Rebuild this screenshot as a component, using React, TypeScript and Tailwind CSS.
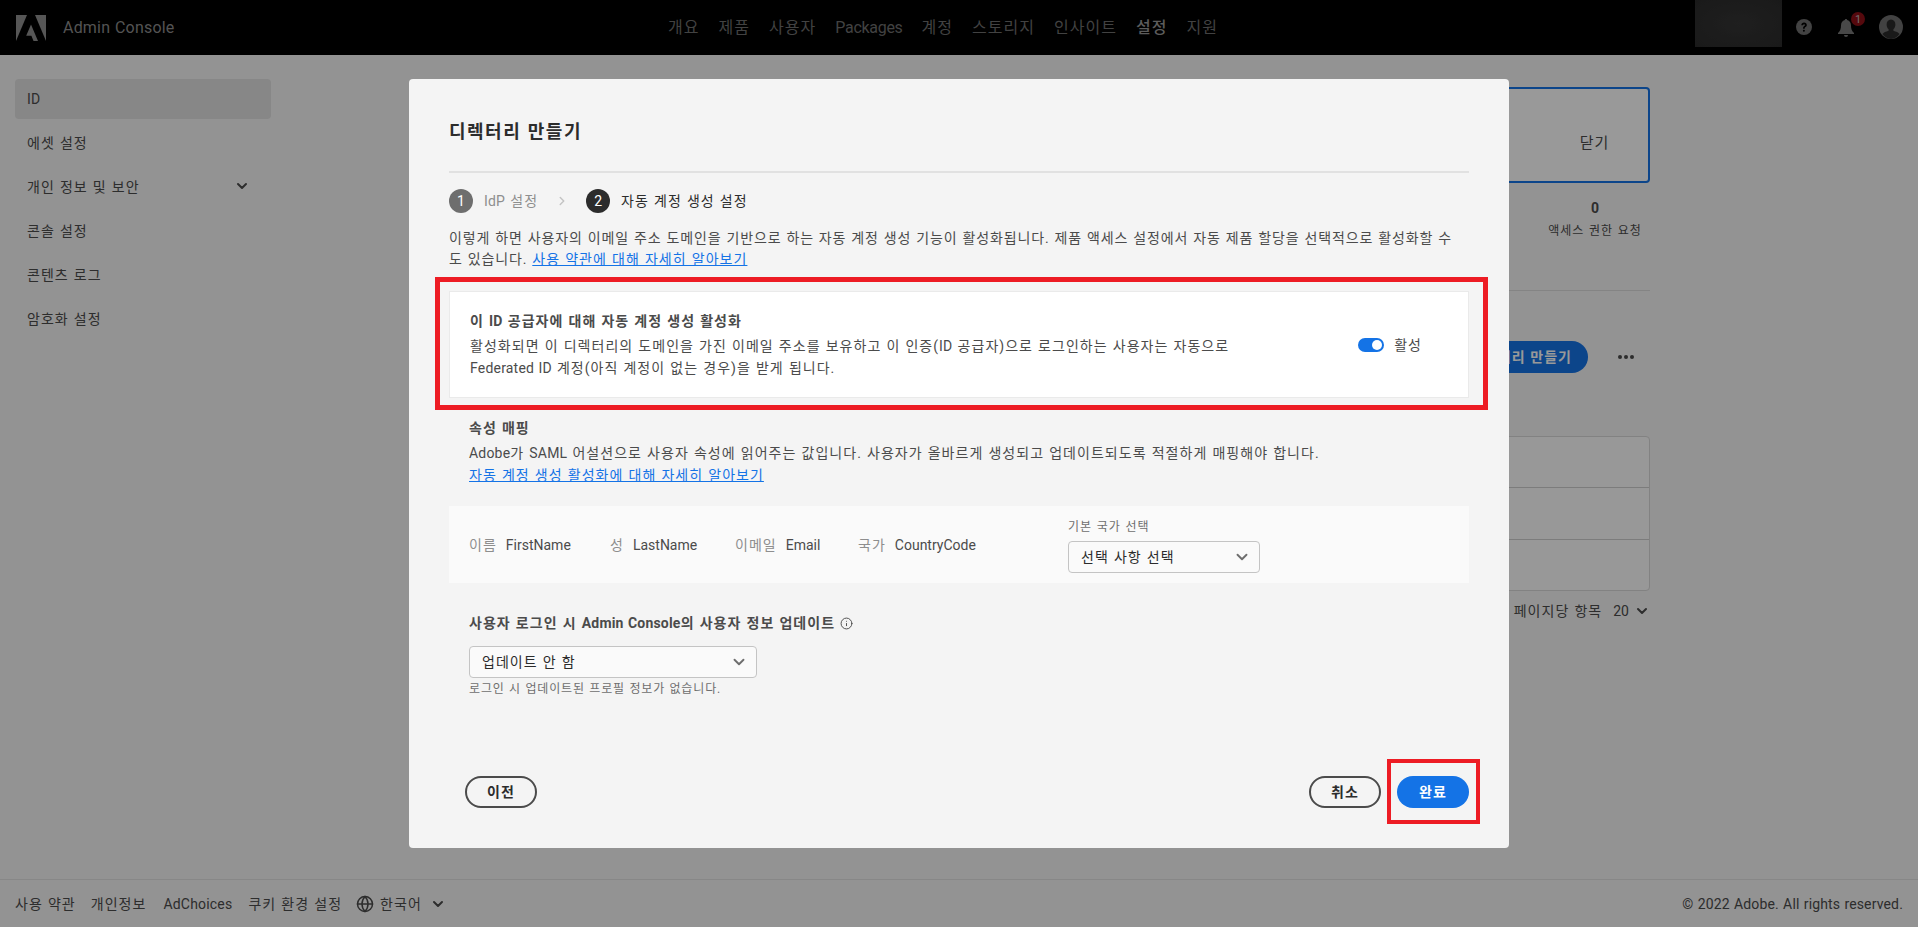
import React from 'react';
import { ChevronDown, ChevronRight, Globe, Info } from 'lucide-react';

const navItems = ['개요', '제품', '사용자', 'Packages', '계정', '스토리지', '인사이트', '설정', '지원'];
const sideItems = ['ID', '에셋 설정', '개인 정보 및 보안', '콘솔 설정', '콘텐츠 로그', '암호화 설정'];
const mappings = [
  { label: '이름', value: 'FirstName', width: 'w-[141px]' },
  { label: '성', value: 'LastName', width: 'w-[125px]' },
  { label: '이메일', value: 'Email', width: 'w-[123px]' },
  { label: '국가', value: 'CountryCode', width: 'w-[210px]' },
];

const Latin: React.FC<{ children: React.ReactNode }> = ({ children }) => (
  <span className="tracking-[0.2px]">{children}</span>
);

const Header = () => (
  <header className="relative flex h-[55px] shrink-0 items-center bg-black text-[#6e6e6e]">
    <svg viewBox="0 0 30 26" className="ml-4 h-[26px] w-[30px]" fill="#8f8f8f">
      <path d="M0 0h11L0 26z" />
      <path d="M19 0h11v26z" />
      <path d="M15 9.5 22 26h-4.500l-2.100-5.200h-5.200z" />
    </svg>
    <span className="ml-[17px] w-[605px] text-base tracking-[0.2px] text-[#8c8c8c]">Admin Console</span>
    <nav className="flex items-center gap-[19px] text-base">
      {navItems.map((item) => (
        <span key={item} className={item === '설정' ? 'font-medium text-[#999999]' : ''}>
          {item === 'Packages' ? <span className="tracking-[-0.3px]">{item}</span> : item}
        </span>
      ))}
    </nav>
    <div className="ml-auto flex h-full items-start">
      <div className="h-[47px] w-[87px] bg-[radial-gradient(ellipse_at_center,#343434_0%,#2b2b2b_100%)]" />
      <svg viewBox="0 0 16 16" className="ml-[14px] mt-[19px] h-4 w-4">
        <circle cx="8" cy="8" r="8" fill="#707070" />
        <path d="M5.3 6.2C5.4 4.6 6.5 3.6 8.1 3.6c1.6 0 2.7 1 2.7 2.3 0 1-.5 1.6-1.3 2.1-.6.4-.8.7-.8 1.3v.4H7.1v-.6c0-1 .4-1.5 1.1-2 .6-.4.8-.7.8-1.1 0-.5-.4-.8-.9-.8-.6 0-1 .4-1.1 1z" fill="#000" />
        <circle cx="7.9" cy="11.8" r="1" fill="#000" />
      </svg>
      <div className="relative ml-[26px] mt-[19px]">
        <svg viewBox="0 0 16 18" className="h-[18px] w-4" fill="#787878">
          <path d="M8 0c.7 0 1.2.5 1.2 1.1C11.6 1.7 13 3.700 13 6.500c0 3.200.8 5.500 3 7.500v1H0v-1c2.200-2 3-4.300 3-7.500 0-2.800 1.400-4.800 3.800-5.400C6.800.5 7.300 0 8 0z" />
          <path d="M6 16h4a2 2 0 0 1-4 0z" />
        </svg>
        <span className="absolute left-[13px] top-[-7px] flex h-[14px] w-[14px] items-center justify-center rounded-full bg-[#8e0f16] text-[11px] leading-none tracking-normal text-[#b9b9b9]">
          1
        </span>
      </div>
      <svg viewBox="0 0 24 24" className="ml-[25px] mr-[15px] mt-[15px] h-6 w-6">
        <circle cx="12" cy="12" r="12" fill="#6e6e6e" />
        <path d="M12 4.500c2.800 0 4.400 2.200 4.400 5 0 2-.8 3.800-2 4.800v1.500c2.800.8 5 1.700 6.200 3.200A12 12 0 0 1 12 24a12 12 0 0 1-8.600-5c1.200-1.500 3.400-2.400 6.200-3.200v-1.500c-1.200-1-2-2.800-2-4.800 0-2.800 1.600-5 4.400-5z" fill="#2b2b2b" />
      </svg>
    </div>
  </header>
);

const Sidebar = () => (
  <aside className="w-[486px] shrink-0 pl-[15px] pt-6 text-sm text-[#4b4b4b]">
    <ul className="flex w-[256px] flex-col gap-1">
      {sideItems.map((item) => (
        <li
          key={item}
          className={`flex h-10 items-center justify-between rounded-[4px] pl-3 pr-[21px] ${item === 'ID' ? 'bg-[#e1e1e1]' : ''}`}
        >
          {item === 'ID' ? <Latin>{item}</Latin> : item}
          {item === '개인 정보 및 보안' && <ChevronDown size={16} strokeWidth={3} className="-translate-y-px" />}
        </li>
      ))}
    </ul>
  </aside>
);

// only the part right of the modal is visible, it starts behind the dialog
const MainBehind = () => (
  <main className="flex min-w-0 flex-1 flex-col pr-[268px] pt-8 text-[#4b4b4b]">
    <div className="flex h-24 items-center justify-end rounded-[4px] border-2 border-[#1473e6] bg-white pt-4">
      <span className="w-[107px] text-center text-[15px]">닫기</span>
    </div>
    <div className="ml-auto mt-[15px] w-[110px] text-center">
      <div className="text-sm font-bold leading-5 tracking-normal">0</div>
      <div className="mt-1 text-xs leading-[18px]">액세스 권한 요청</div>
    </div>
    <div className="mt-[50px] h-px bg-[#dcdcdc]" />
    <div className="mt-[50px] flex items-center justify-end">
      <button className="h-8 w-[180px] rounded-full bg-[#1473e6] pr-4 text-right text-sm font-bold text-white">
        디렉터리 만들기
      </button>
      <span className="ml-[30px] mr-[16px] flex w-4 justify-between">
        <i className="h-1 w-1 rounded-full bg-[#4b4b4b]" />
        <i className="h-1 w-1 rounded-full bg-[#4b4b4b]" />
        <i className="h-1 w-1 rounded-full bg-[#4b4b4b]" />
      </span>
    </div>
    <div className="mt-[63px] flex h-[155px] flex-col divide-y divide-[#cfcfcf] rounded-[4px] border border-[#d9d9d9] bg-[#fdfdfd]">
      <div className="flex-1" />
      <div className="flex-1" />
      <div className="flex-1" />
    </div>
    <div className="mt-[10px] flex h-5 items-center justify-end text-sm">
      <span>페이지당 항목</span>
      <span className="ml-[11px] tracking-normal">20</span>
      <ChevronDown size={16} strokeWidth={3} className="ml-[5px]" />
    </div>
  </main>
);

const Footer = () => (
  <footer className="flex h-12 shrink-0 items-center border-t border-[#e1e1e1] px-[15px] text-sm text-[#4b4b4b]">
    <span>사용 약관</span>
    <span className="ml-[15px]">개인정보</span>
    <span className="ml-[17px]"><Latin>AdChoices</Latin></span>
    <span className="ml-[16px]">쿠키 환경 설정</span>
    <Globe size={18} className="ml-[14px]" />
    <span className="ml-[6px]">한국어</span>
    <ChevronDown size={16} strokeWidth={3} className="ml-[8px]" />
    <span className="ml-auto tracking-[0.15px]">© 2022 Adobe. All rights reserved.</span>
  </footer>
);

const Select: React.FC<{ label: string; width: string }> = ({ label, width }) => (
  <div className={`flex h-8 items-center justify-between rounded-[4px] border border-[#c4c4c4] bg-[#fafafa] pl-[12px] pr-[8px] text-sm text-[#2c2c2c] ${width}`}>
    <span>{label}</span>
    <ChevronDown size={18} strokeWidth={2.5} className="text-[#6e6e6e]" />
  </div>
);

const Modal = () => (
  <div className="absolute left-[409px] top-[79px] flex h-[769px] w-[1100px] flex-col rounded-[4px] bg-[#f4f4f4] px-10 pb-10 pt-[38px] text-sm text-[#4b4b4b]">
    <h2 className="h-[30px] text-[18px] font-bold leading-[30px] tracking-[1.5px] text-[#2c2c2c]">디렉터리 만들기</h2>
    <div className="mt-[24px] h-[2px] bg-[#e1e1e1]" />

    <div className="mt-4 flex h-6 items-center">
      <span className="flex h-6 w-6 items-center justify-center rounded-full bg-[#6e6e6e] tracking-normal text-white">1</span>
      <span className="ml-[11px] text-[#8e8e8e]"><Latin>IdP</Latin> 설정</span>
      <ChevronRight size={14} strokeWidth={2.5} className="ml-[17px] text-[#c4c4c4]" />
      <span className="ml-[17px] flex h-6 w-6 items-center justify-center rounded-full bg-[#2c2c2c] tracking-normal text-white">2</span>
      <span className="ml-[11px] text-[#2c2c2c]">자동 계정 생성 설정</span>
    </div>

    <p className="mt-[15px] leading-[21px] tracking-[0.88px]">
      이렇게 하면 사용자의 이메일 주소 도메인을 기반으로 하는 자동 계정 생성 기능이 활성화됩니다. 제품 액세스 설정에서 자동 제품 할당을 선택적으로 활성화할 수
      <br />
      도 있습니다. <a className="tracking-[1.03px] text-[#1473e6] underline">사용 약관에 대해 자세히 알아보기</a>
    </p>

    <section className="mt-[21px] flex h-[107px] items-center justify-between border border-[#eaeaea] bg-white pl-5 pr-[46px]">
      <div>
        <h3 className="font-bold leading-5 text-[#4b4b4b]">이 <Latin>ID</Latin> 공급자에 대해 자동 계정 생성 활성화</h3>
        <p className="mt-1 leading-[22px]">
          활성화되면 이 디렉터리의 도메인을 가진 이메일 주소를 보유하고 이 인증(<Latin>ID</Latin> 공급자)으로 로그인하는 사용자는 자동으로
          <br />
          <Latin>Federated ID</Latin> 계정(아직 계정이 없는 경우)을 받게 됩니다.
        </p>
      </div>
      <div className="flex items-center gap-[10px]">
        <span className="flex h-[14px] w-[26px] items-center justify-end rounded-full bg-[#1473e6] pr-[2px]">
          <i className="h-[10px] w-[10px] rounded-full bg-white" />
        </span>
        <span>활성</span>
      </div>
    </section>

    <section className="mt-5 pl-5">
      <h3 className="font-bold leading-[21px]">속성 매핑</h3>
      <p className="mt-[4px] leading-[21px]">
        <Latin>Adobe</Latin>가 <Latin>SAML</Latin> 어설션으로 사용자 속성에 읽어주는 값입니다. 사용자가 올바르게 생성되고 업데이트되도록 적절하게 매핑해야 합니다.
      </p>
      <a className="block leading-[22px] text-[#1473e6] underline">자동 계정 생성 활성화에 대해 자세히 알아보기</a>
    </section>

    <section className="mt-5 flex h-[77px] items-center bg-[#fafafa] pl-5">
      {mappings.map((m) => (
        <div key={m.label} className={`flex gap-[9px] ${m.width}`}>
          <span className="text-[#8e8e8e]">{m.label}</span>
          <span className="tracking-normal">{m.value}</span>
        </div>
      ))}
      <div className="mt-3 self-start">
        <div className="mb-[5px] text-xs leading-[18px] text-[#6e6e6e]">기본 국가 선택</div>
        <Select label="선택 사항 선택" width="w-[192px]" />
      </div>
    </section>

    <section className="mt-[30px] pl-5">
      <h3 className="flex items-center gap-[5px] font-bold leading-[21px]">
        <span>사용자 로그인 시 <Latin>Admin Console</Latin>의 사용자 정보 업데이트</span>
        <Info size={13} strokeWidth={1.75} />
      </h3>
      <div className="mt-[12px]">
        <Select label="업데이트 안 함" width="w-[288px]" />
      </div>
      <p className="mt-[3px] text-xs leading-4 tracking-[0.85px] text-[#6e6e6e]">로그인 시 업데이트된 프로필 정보가 없습니다.</p>
    </section>

    <div className="mt-auto flex items-center">
      <button className="ml-4 h-8 w-[72px] rounded-full border-2 border-[#4b4b4b] font-bold text-[#2c2c2c]">이전</button>
      <button className="ml-auto h-8 w-[72px] rounded-full border-2 border-[#4b4b4b] font-bold text-[#2c2c2c]">취소</button>
      <button className="ml-4 h-8 w-[72px] rounded-full bg-[#1473e6] font-bold text-white">완료</button>
    </div>

    {/* red callouts drawn on top of the screenshot */}
    <div className="absolute left-[26px] top-[198px] h-[133px] w-[1053px] border-[5px] border-[#ed1c24]" />
    <div className="absolute left-[978px] top-[680px] h-[65px] w-[93px] border-[4px] border-[#ed1c24]" />
  </div>
);

export default function App() {
  return (
    <div className="relative flex h-[927px] flex-col overflow-hidden bg-[#f5f5f5] font-['Roboto','Noto_Sans_CJK_KR',sans-serif] tracking-[1.03px] [word-spacing:0.6px]">
      <Header />
      <div className="flex min-h-0 flex-1">
        <Sidebar />
        <MainBehind />
      </div>
      <Footer />
      <div className="absolute inset-0 bg-black/40" />
      <Modal />
    </div>
  );
}
